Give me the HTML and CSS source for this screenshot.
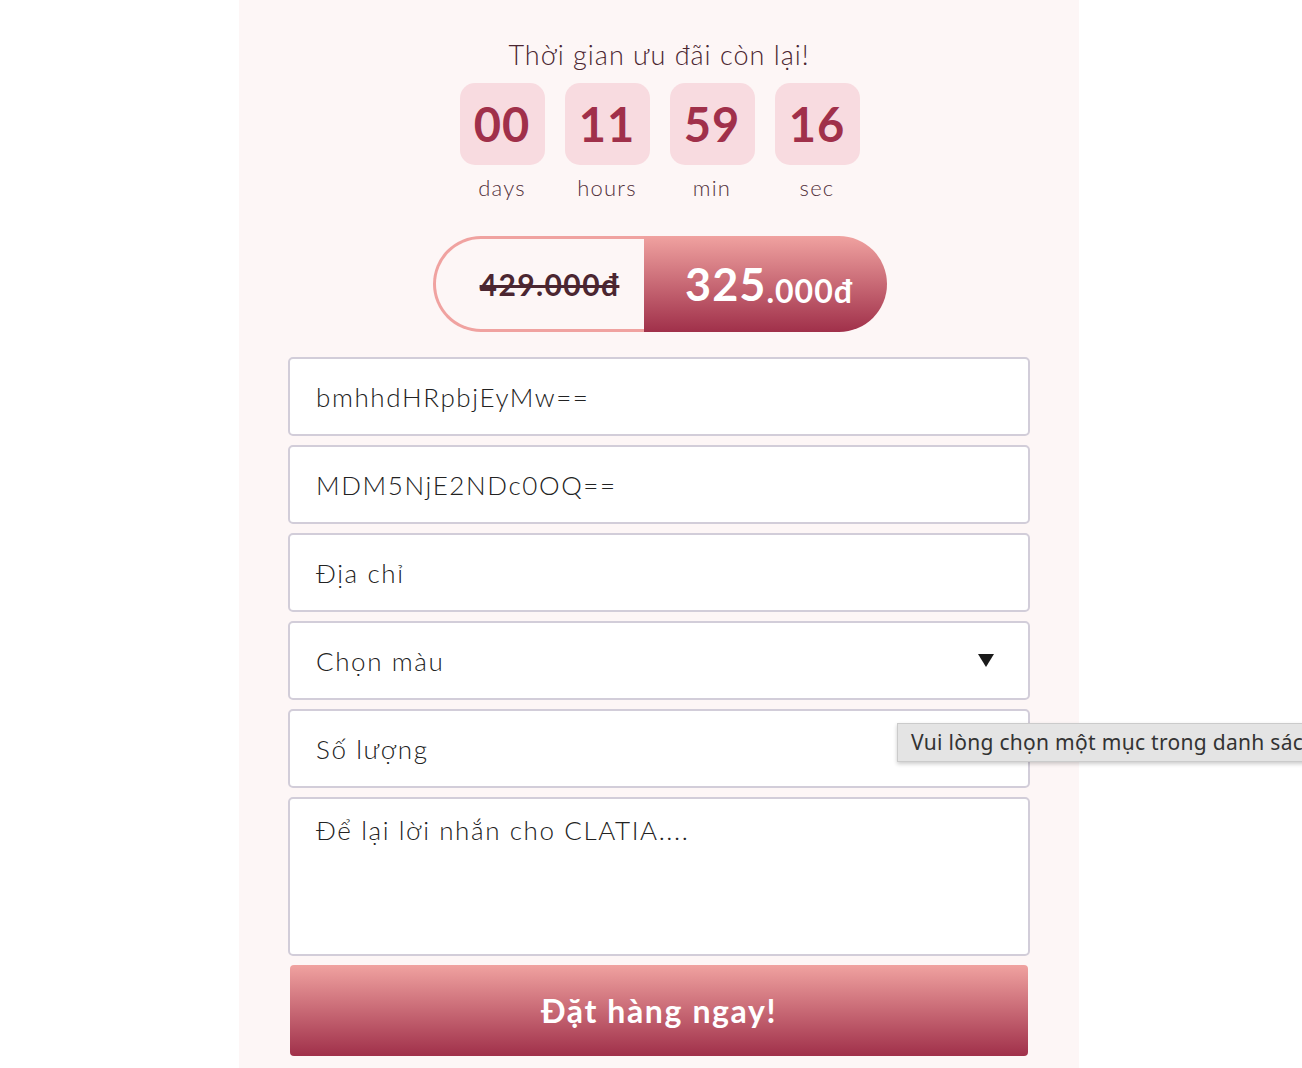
FILE: index.html
```html
<!doctype html>
<html>
<head>
<meta charset="UTF-8">
<title>Đặt hàng</title>
<link rel="stylesheet" href="styles.css">
</head>
<body>
<div class="panel">
    <div class="timer">
        <p class="timer-title">Thời gian ưu đãi còn lại!</p>
        <ul class="count">
            <li><span class="num">00</span><span class="unit">days</span></li>
            <li><span class="num">11</span><span class="unit">hours</span></li>
            <li><span class="num">59</span><span class="unit">min</span></li>
            <li><span class="num">16</span><span class="unit">sec</span></li>
        </ul>
    </div>

    <div class="price">
        <div class="old">429.000đ</div>
        <div class="new">325<small>.000đ</small></div>
    </div>

    <form class="order">
        <div class="field">bmhhdHRpbjEyMw==</div>
        <div class="field">MDM5NjE2NDc0OQ==</div>
        <div class="field">Địa chỉ</div>
        <div class="field select">Chọn màu<span class="arrow"></span></div>
        <div class="field">Số lượng</div>
        <div class="field area">Để lại lời nhắn cho CLATIA....</div>
        <div class="btn">Đặt hàng ngay!</div>
    </form>
</div>
<div class="tip">Vui lòng chọn một mục trong danh sách.</div>
</body>
</html>
```

FILE: styles.css
```css
body,div,ul,li,p,form{margin:0;padding:0;}
ul{list-style-type:none;}
body{background:#fff;font-family:Lato,"Noto Sans",sans-serif;color:#222;overflow:hidden;position:relative;height:1068px;}

.panel{width:840px;height:1068px;margin-left:239px;background:#fdf6f6;}

.timer{padding-top:38px;text-align:center;}
.timer-title{font-size:27px;line-height:34px;font-weight:300;color:#4b2631;letter-spacing:1px;}
.count{display:flex;justify-content:center;gap:20px;margin-top:11px;padding-left:1px;}
.count li{display:flex;flex-direction:column;align-items:center;width:85px;}
.count .num{width:85px;height:82px;border-radius:15px;background:#f8dbe0;color:#a0304a;font-size:47px;font-weight:700;line-height:82px;letter-spacing:1px;}
.count .unit{margin-top:8px;font-size:22px;line-height:30px;font-weight:300;color:#53303b;letter-spacing:1.2px;}

.price{display:flex;width:454px;height:96px;margin:33px auto 0;padding-left:1px;}
.price .old{width:211px;box-sizing:border-box;border:3px solid #f0a2a0;border-right:0;border-radius:48px 0 0 48px;display:flex;align-items:center;justify-content:center;padding-left:20px;font-size:30px;font-weight:700;color:#4b2631;letter-spacing:1.4px;text-decoration:line-through;text-decoration-thickness:3px;}
.price .new{width:243px;box-sizing:border-box;border-radius:0 48px 48px 0;background:linear-gradient(#f0a2a0,#a0304a);color:#fff;display:flex;align-items:center;justify-content:center;padding-left:8px;font-size:45px;font-weight:700;letter-spacing:1px;}
.price .new small{font-size:32px;margin-top:12px;}

.order{padding:25px 49px 0;}
.field{height:79px;box-sizing:border-box;border:2px solid #d2cdd9;border-radius:5px;background:#fff;margin-bottom:9px;padding:0 26px;display:flex;align-items:center;font-size:26px;font-weight:300;color:#222;letter-spacing:1.6px;}
.select{justify-content:space-between;}
.arrow{width:0;height:0;border-left:8px solid transparent;border-right:8px solid transparent;border-top:13px solid #1a1a1a;margin-right:8px;}
.area{height:159px;align-items:flex-start;padding-top:15px;}
.btn{height:91px;margin:0 2px;border-radius:4px;background:linear-gradient(#f0a2a0,#a0304a);color:#fff;display:flex;align-items:center;justify-content:center;font-size:32px;font-weight:700;letter-spacing:1.6px;}

.tip{position:absolute;left:897px;top:723px;height:39px;box-sizing:border-box;padding:0 13px;border:1px solid #cbcbcb;background:#e4e4e4;box-shadow:0 2px 4px rgba(0,0,0,.2);white-space:nowrap;font-family:"Noto Sans",sans-serif;font-size:21px;line-height:37px;letter-spacing:.3px;color:#333;}
```
